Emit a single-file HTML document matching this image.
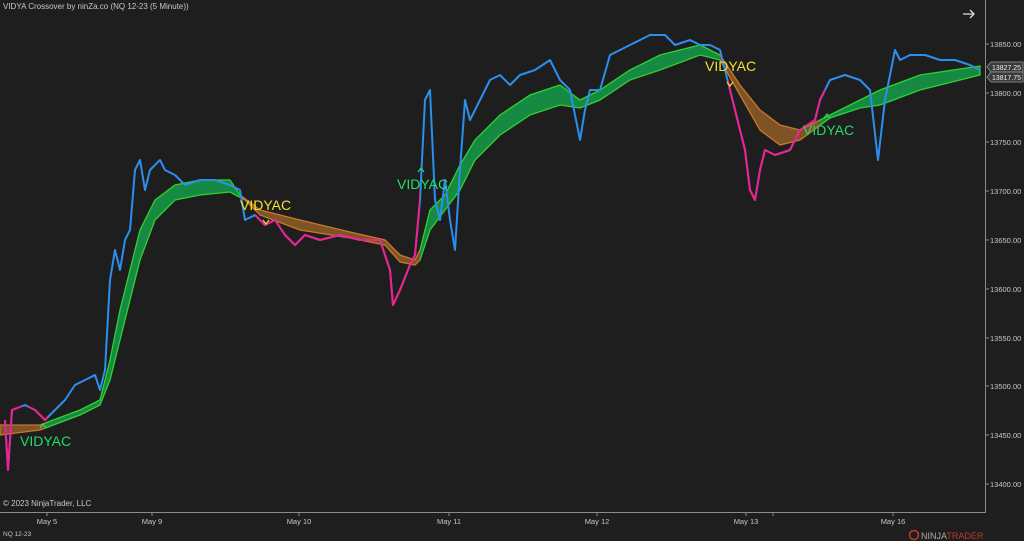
<!DOCTYPE html>
<html><head><meta charset="utf-8"><style>
html,body{margin:0;padding:0;background:#1e1e1e;width:1024px;height:541px;overflow:hidden;font-family:"Liberation Sans",sans-serif}
</style></head><body>
<svg width="1024" height="541" viewBox="0 0 1024 541" xmlns="http://www.w3.org/2000/svg" font-family="Liberation Sans, sans-serif">
<rect width="1024" height="541" fill="#1e1e1e"/>
<defs>
<clipPath id="pk"><rect x="0" y="0" width="22" height="541"/><rect x="28" y="0" width="20" height="541"/><rect x="255" y="0" width="165" height="541"/><rect x="728" y="0" width="97" height="541"/></clipPath>
<clipPath id="or"><rect x="0" y="0" width="45" height="541"/><rect x="240" y="0" width="180" height="541"/><rect x="720" y="0" width="100" height="541"/></clipPath>
<clipPath id="gr"><rect x="45" y="0" width="195" height="541"/><rect x="420" y="0" width="300" height="541"/><rect x="820" y="0" width="165" height="541"/></clipPath>
</defs>
<path id="bp" d="M0,425 L40,425 80,410 100,400 110,360 120,310 130,270 140,230 155,200 175,185 200,180 230,180 240,195 260,210 300,220 350,232 385,240 400,255 415,260 420,250 430,210 445,195 460,165 475,140 500,115 530,95 560,85 580,100 600,90 630,70 660,55 700,45 720,55 740,85 760,110 780,125 800,130 830,115 860,100 880,90 920,75 980,66 L980,75 920,90 880,105 860,108 830,118 800,140 780,145 760,130 740,95 720,60 700,55 660,70 630,80 600,100 580,108 560,105 530,115 500,135 475,160 460,190 445,210 430,230 420,260 415,265 400,262 385,245 350,238 300,230 260,215 245,200 230,192 200,195 175,200 155,220 140,260 130,300 120,340 110,380 100,405 80,415 40,430 0,435 Z"/>
<use href="#bp" clip-path="url(#gr)" fill="#168a42" stroke="#2fd12f" stroke-width="1.3"/>
<use href="#bp" clip-path="url(#or)" fill="#7e5426" stroke="#c8782a" stroke-width="1.3"/>
<path id="pr" fill="none" stroke-width="2" stroke-linejoin="round" d="M5,420 8,470 12,410 25,405 35,410 45,420 55,410 65,400 75,385 85,380 95,375 100,390 105,370 110,280 115,250 120,270 125,240 130,230 135,170 140,160 145,190 150,170 155,165 160,160 165,170 175,175 185,185 200,180 215,180 230,185 240,190 245,220 255,215 265,225 275,220 285,235 295,245 305,235 320,240 340,235 360,240 380,240 390,270 393,305 400,290 410,265 415,255 420,200 425,100 430,90 435,200 440,220 445,180 450,220 455,250 460,170 465,100 470,120 480,100 490,80 500,75 510,85 520,75 535,70 550,60 560,80 570,90 580,140 585,110 590,90 600,90 610,55 620,50 630,45 640,40 650,35 665,35 675,45 690,40 700,45 710,45 720,50 730,90 735,110 740,130 745,150 750,190 755,200 760,170 765,150 775,155 790,150 800,130 815,120 820,100 830,80 845,75 860,80 870,90 878,160 885,100 895,50 900,60 910,55 925,55 940,60 955,60 970,65 980,70"/>
<use href="#pr" stroke="#2b8fee"/>
<use href="#pr" stroke="#f0208c" clip-path="url(#pk)"/>
<g font-size="14">
<text x="20" y="446" fill="#22dd66">VIDYAC</text>
<text x="397" y="189" fill="#22dd66">VIDYAC</text>
<text x="803" y="135" fill="#22dd66">VIDYAC</text>
<text x="240" y="210" fill="#f0e030">VIDYAC</text>
<text x="705" y="71" fill="#f0e030">VIDYAC</text>
</g>
<g fill="none" stroke-width="1.2">
<path d="M40,428 l3,-4 3,4" stroke="#22dd66"/><path d="M418,172 l3,-4 3,4" stroke="#22dd66"/><path d="M824,118 l3,-4 3,4" stroke="#22dd66"/>
<path d="M263,220 l3,4 3,-4" stroke="#f0e030"/><path d="M727,82 l3,4 3,-4" stroke="#f0e030"/>
</g>
<rect x="985" y="0" width="39" height="541" fill="#1e1e1e"/>
<line x1="985.5" y1="0" x2="985.5" y2="513" stroke="#8a8a8a"/>
<line x1="0" y1="512.5" x2="986" y2="512.5" stroke="#8a8a8a"/>
<g font-size="8" fill="#c8c8c8">
<text x="3" y="9">VIDYA Crossover by ninZa.co (NQ 12-23 (5 Minute))</text>
<text x="3" y="506">© 2023 NinjaTrader, LLC</text>
<text x="3" y="536" font-size="6.5">NQ 12-23</text>
</g>
<g font-size="7.5" fill="#c8c8c8">
<text x="990" y="47">13850.00</text><text x="990" y="96">13800.00</text><text x="990" y="145">13750.00</text><text x="990" y="194">13700.00</text><text x="990" y="243">13650.00</text><text x="990" y="292">13600.00</text><text x="990" y="341">13550.00</text><text x="990" y="389">13500.00</text><text x="990" y="438">13450.00</text><text x="990" y="487">13400.00</text>
</g>
<g stroke="#8a8a8a"><line x1="985" y1="44" x2="989" y2="44"/><line x1="985" y1="93" x2="989" y2="93"/><line x1="985" y1="142" x2="989" y2="142"/><line x1="985" y1="191" x2="989" y2="191"/><line x1="985" y1="240" x2="989" y2="240"/><line x1="985" y1="289" x2="989" y2="289"/><line x1="985" y1="338" x2="989" y2="338"/><line x1="985" y1="386" x2="989" y2="386"/><line x1="985" y1="435" x2="989" y2="435"/><line x1="985" y1="484" x2="989" y2="484"/></g>
<g fill="#3a3a3a" stroke="#999" stroke-width="0.8"><path d="M987,67 l4,-5 h32 v10 h-32 z"/><path d="M987,77 l4,-5 h32 v10 h-32 z"/></g>
<g font-size="7.5" fill="#eee"><text x="992" y="70" textLength="29" lengthAdjust="spacingAndGlyphs">13827.25</text><text x="992" y="80" textLength="29" lengthAdjust="spacingAndGlyphs">13817.75</text></g>
<g stroke="#8a8a8a"><line x1="47" y1="512" x2="47" y2="516"/><line x1="152" y1="512" x2="152" y2="516"/><line x1="299" y1="512" x2="299" y2="516"/><line x1="449" y1="512" x2="449" y2="516"/><line x1="597" y1="512" x2="597" y2="516"/><line x1="746" y1="512" x2="746" y2="516"/><line x1="773" y1="512" x2="773" y2="516"/><line x1="893" y1="512" x2="893" y2="516"/></g>
<g font-size="7.5" fill="#c8c8c8" text-anchor="middle"><text x="47" y="524">May 5</text><text x="152" y="524">May 9</text><text x="299" y="524">May 10</text><text x="449" y="524">May 11</text><text x="597" y="524">May 12</text><text x="746" y="524">May 13</text><text x="893" y="524">May 16</text></g>
<path d="M963,14 h11 M970,10 l4,4 -4,4" stroke="#ddd" stroke-width="1.3" fill="none"/>
<circle cx="914" cy="535" r="4.5" fill="none" stroke="#c0392b" stroke-width="1.5"/>
<text x="921" y="539" font-size="9" fill="#aaa">NINJA<tspan fill="#c0392b">TRADER</tspan></text>
</svg>
</body></html>
